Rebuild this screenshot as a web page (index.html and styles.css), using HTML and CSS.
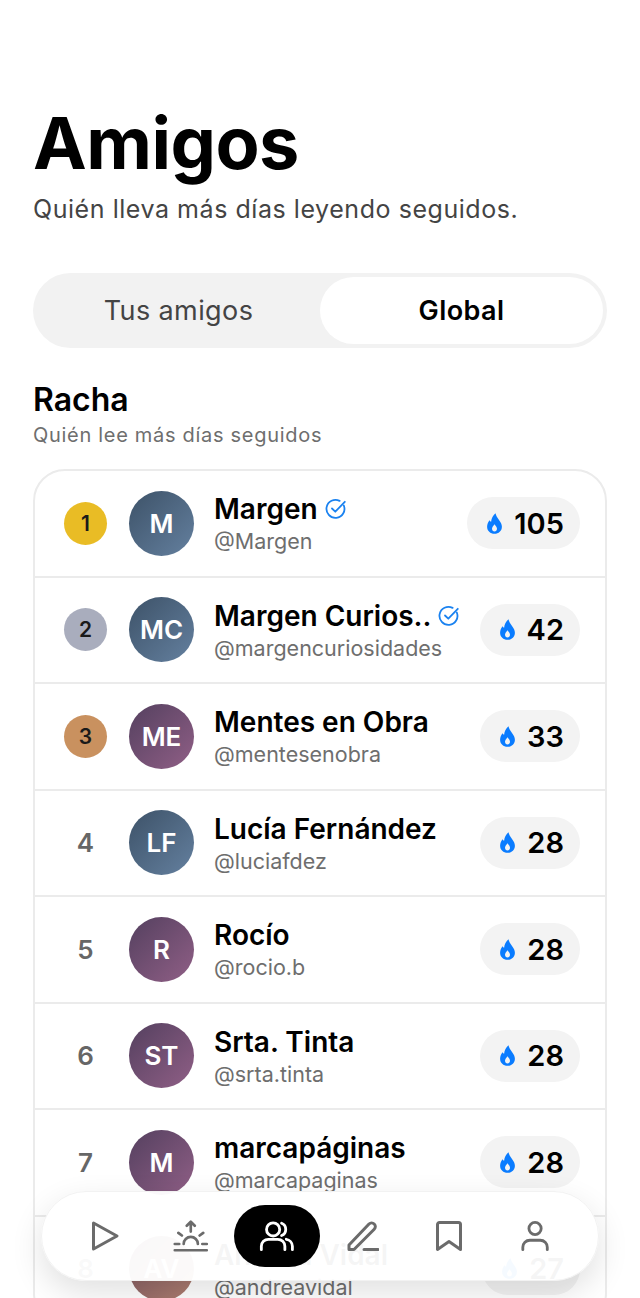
FILE: index.html
```html
<!DOCTYPE html>
<html lang="es">
<head>
    <meta charset="UTF-8">
    <meta name="viewport" content="width=device-width, initial-scale=1.0">
    <title>Amigos</title>
    <link rel="stylesheet" href="styles.css">
</head>
<body>
    <svg class="defs" width="0" height="0">
        <symbol id="flame" viewBox="0 0 15 21">
            <path fill-rule="evenodd" d="M8.500 0.300C9 3 10.400 4.700 12 6.900C13.700 9.200 14.900 11.300 14.900 13.700C14.900 17.900 11.600 20.800 7.500 20.800C3.400 20.800 0.100 17.900 0.100 13.700C0.100 11.200 1.100 9 2.500 7.200C2.900 7.900 3.400 8.400 4.100 8.700C4.400 5.400 6 2.400 8.500 0.300ZM7.500 11.200C6.300 12.800 5 14.200 5 15.800C5 17.400 6.100 18.500 7.500 18.500C8.900 18.500 10 17.400 10 15.800C10 14.200 8.700 12.800 7.500 11.200Z"/>
        </symbol>
        <symbol id="verified" viewBox="0 0 22 22">
            <path d="M18.800 7.500A9 9 0 1 1 14.600 2.900" fill="none" stroke="currentColor" stroke-width="1.800" stroke-linecap="round"/>
            <path d="M7 10.500L10.300 13.700L19.800 3.800" fill="none" stroke="currentColor" stroke-width="1.800" stroke-linecap="round" stroke-linejoin="round"/>
        </symbol>
    </svg>

    <main class="page">
        <h1 class="title">Amigos</h1>
        <p class="subtitle">Quién lleva más días leyendo seguidos.</p>

        <div class="tabs">
            <div class="tab">Tus amigos</div>
            <div class="tab tab-active">Global</div>
        </div>

        <h2 class="section-title">Racha</h2>
        <p class="section-sub">Quién lee más días seguidos</p>

        <div class="card">
            <div class="row">
                <div class="rank"><span class="medal gold">1</span></div>
                <div class="avatar blue">M</div>
                <div class="info">
                    <div class="name">Margen <svg class="check"><use href="#verified"/></svg></div>
                    <div class="handle">@Margen</div>
                </div>
                <div class="streak"><svg class="flame"><use href="#flame"/></svg>105</div>
            </div>
            <div class="row">
                <div class="rank"><span class="medal silver">2</span></div>
                <div class="avatar blue">MC</div>
                <div class="info">
                    <div class="name">Margen Curios.. <svg class="check"><use href="#verified"/></svg></div>
                    <div class="handle">@margencuriosidades</div>
                </div>
                <div class="streak"><svg class="flame"><use href="#flame"/></svg>42</div>
            </div>
            <div class="row">
                <div class="rank"><span class="medal bronze">3</span></div>
                <div class="avatar plum">ME</div>
                <div class="info">
                    <div class="name">Mentes en Obra</div>
                    <div class="handle">@mentesenobra</div>
                </div>
                <div class="streak"><svg class="flame"><use href="#flame"/></svg>33</div>
            </div>
            <div class="row">
                <div class="rank">4</div>
                <div class="avatar blue">LF</div>
                <div class="info">
                    <div class="name">Lucía Fernández</div>
                    <div class="handle">@luciafdez</div>
                </div>
                <div class="streak"><svg class="flame"><use href="#flame"/></svg>28</div>
            </div>
            <div class="row">
                <div class="rank">5</div>
                <div class="avatar plum">R</div>
                <div class="info">
                    <div class="name">Rocío</div>
                    <div class="handle">@rocio.b</div>
                </div>
                <div class="streak"><svg class="flame"><use href="#flame"/></svg>28</div>
            </div>
            <div class="row">
                <div class="rank">6</div>
                <div class="avatar plum">ST</div>
                <div class="info">
                    <div class="name">Srta. Tinta</div>
                    <div class="handle">@srta.tinta</div>
                </div>
                <div class="streak"><svg class="flame"><use href="#flame"/></svg>28</div>
            </div>
            <div class="row">
                <div class="rank">7</div>
                <div class="avatar plum">M</div>
                <div class="info">
                    <div class="name">marcapáginas</div>
                    <div class="handle">@marcapaginas</div>
                </div>
                <div class="streak"><svg class="flame"><use href="#flame"/></svg>28</div>
            </div>
            <div class="row">
                <div class="rank">8</div>
                <div class="avatar rose">AV</div>
                <div class="info">
                    <div class="name">Andrea Vidal</div>
                    <div class="handle">@andreavidal</div>
                </div>
                <div class="streak"><svg class="flame"><use href="#flame"/></svg>27</div>
            </div>
        </div>
    </main>

    <nav class="nav">
        <div class="nav-item">
            <svg viewBox="0 0 32 32"><path d="M4.500 3L28 16L4.500 29Z"/></svg>
        </div>
        <div class="nav-item">
            <svg viewBox="0 -1 40 36"><path d="M20 12V1M15.500 5.500L20 1L24.500 5.500M6 13.500L10 16.500M34 13.500L30 16.500M12 26A8 8 0 0 1 28 26M2 26H7M33 26H38M2 33H38"/></svg>
        </div>
        <div class="nav-item nav-active">
            <svg viewBox="0 0 38 34"><circle cx="15" cy="10" r="7"/><path d="M24 3.500A7 7 0 0 1 24 16.500M2.500 31.500V28A7.500 7.500 0 0 1 10 20.500H20A7.500 7.500 0 0 1 27.500 28V31.500M29 20.500C32.500 21 35.500 24 35.500 28V31.500"/></svg>
        </div>
        <div class="nav-item">
            <svg viewBox="0 0 32 32"><path d="M2 29.500V25L22 4C23.500 2.500 25.700 2.500 27.200 4C28.700 5.500 28.700 7.700 27.200 9.200L7 29.500H2ZM17 29.500H31"/></svg>
        </div>
        <div class="nav-item">
            <svg viewBox="0 0 28 32"><path d="M2.500 29.500V4.500A2 2 0 0 1 4.500 2.500H23.500A2 2 0 0 1 25.500 4.500V29.500L14 21.500Z"/></svg>
        </div>
        <div class="nav-item">
            <svg viewBox="0 0 32 34"><circle cx="16" cy="9" r="6.500"/><path d="M3 31.500V29A7.500 7.500 0 0 1 10.500 21.500H21.500A7.500 7.500 0 0 1 29 29V31.500"/></svg>
        </div>
    </nav>
</body>
</html>
```

FILE: styles.css
```css
* {
    box-sizing: border-box;
}

html,
body {
    height: 100%;
}

body {
    margin: 0;
    background-color: #fff;
    color: #000;
    font-family: Inter, "Liberation Sans", sans-serif;
    overflow: hidden;
    position: relative;
}

.defs {
    display: none;
}

.page {
    padding: 103px 33px 0;
}

.title {
    margin: 0;
    font-size: 72px;
    line-height: 80px;
    font-weight: 700;
    letter-spacing: -0.500px;
}

.subtitle {
    margin: 8px 0 0;
    font-size: 25px;
    line-height: 36px;
    letter-spacing: 0.550px;
    color: #444;
}

.tabs {
    display: flex;
    margin-top: 46px;
    height: 75px;
    padding: 4px;
    border-radius: 38px;
    background-color: #f2f2f2;
}

.tab {
    flex: 1;
    display: flex;
    align-items: center;
    justify-content: center;
    border-radius: 34px;
    font-size: 27px;
    letter-spacing: 0.400px;
    color: #444;
}

.tab-active {
    background-color: #fff;
    color: #000;
    font-weight: 600;
}

.section-title {
    margin: 32px 0 0;
    font-size: 32px;
    line-height: 40px;
    font-weight: 600;
}

.section-sub {
    margin: 1px 0 0;
    font-size: 20px;
    line-height: 28px;
    letter-spacing: 0.700px;
    color: #6e6e6e;
}

.card {
    margin-top: 20px;
    border: 2px solid #ebebeb;
    border-radius: 32px;
    overflow: hidden;
}

.row {
    display: flex;
    align-items: center;
    height: 106.500px;
    padding: 0 25px 0 29px;
    border-bottom: 2px solid #ebebeb;
}

.rank {
    flex: none;
    width: 43px;
    margin-right: 22px;
    text-align: center;
    font-size: 26px;
    font-weight: 600;
    color: #666;
}

.medal {
    display: flex;
    align-items: center;
    justify-content: center;
    width: 43px;
    height: 43px;
    border-radius: 50%;
    font-size: 21px;
    color: #1a1a1a;
}

.gold {
    background-color: #e9bc25;
}

.silver {
    background-color: #a9adbd;
}

.bronze {
    background-color: #c9915f;
}

.avatar {
    flex: none;
    display: flex;
    align-items: center;
    justify-content: center;
    width: 65px;
    height: 65px;
    border-radius: 50%;
    font-size: 26px;
    font-weight: 600;
    color: #fff;
}

.blue {
    background: linear-gradient(135deg, #3d5268, #64809f);
}

.plum {
    background: linear-gradient(135deg, #54405f, #905f86);
}

.rose {
    background: linear-gradient(135deg, #7a5560, #b07f70);
}

.info {
    flex: 1;
    min-width: 0;
    margin-left: 20px;
}

.name {
    display: flex;
    align-items: center;
    gap: 7px;
    font-size: 28px;
    line-height: 36px;
    font-weight: 600;
    white-space: nowrap;
}

.check {
    width: 22px;
    height: 22px;
    color: #1a82f0;
}

.handle {
    font-size: 21.500px;
    line-height: 28px;
    color: #6e6e6e;
    white-space: nowrap;
}

.streak {
    flex: none;
    display: flex;
    align-items: center;
    gap: 12px;
    height: 52px;
    padding: 0 16px 0 20px;
    border-radius: 26px;
    background-color: #f3f3f3;
    font-size: 29px;
    font-weight: 600;
}

.flame {
    width: 15px;
    height: 21px;
    fill: #0a7cff;
}

.nav {
    position: absolute;
    left: 41px;
    top: 1191px;
    display: flex;
    align-items: center;
    justify-content: space-between;
    width: 558px;
    height: 90px;
    padding: 0 20px;
    border-radius: 45px;
    background-color: rgba(255, 255, 255, 0.96);
    border: 1px solid #f2f2f2;
    box-shadow: 0 12px 32px rgba(0, 0, 0, 0.12);
}

.nav-item {
    display: flex;
    align-items: center;
    justify-content: center;
    width: 86px;
    height: 62px;
    border-radius: 31px;
}

.nav-item svg {
    height: 32px;
    fill: none;
    stroke: #6b6b6b;
    stroke-width: 3;
    stroke-linecap: round;
    stroke-linejoin: round;
}

.nav-active {
    background-color: #000;
}

.nav-active svg {
    stroke: #fff;
}
```
